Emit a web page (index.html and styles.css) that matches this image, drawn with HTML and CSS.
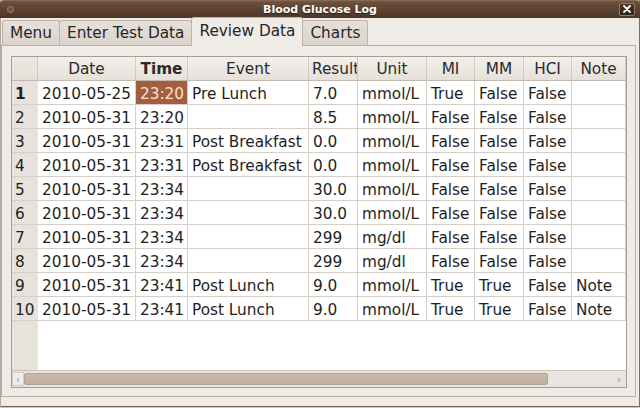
FILE: index.html
```html
<!DOCTYPE html>
<html>
<head>
<meta charset="utf-8">
<title>Blood Glucose Log</title>
<link rel="stylesheet" href="styles.css">
</head>
<body>
<div class="window">
  <div class="titlebar">
    <div class="tb-left"><span class="wm-icon"></span></div>
    <div class="title">Blood Glucose Log</div>
    <div class="tb-right">
      <span class="close"><svg width="8" height="8" viewBox="0 0 8 8"><path d="M1 1L7 7M7 1L1 7" stroke="#fff" stroke-width="1.8" stroke-linecap="round"/></svg></span>
    </div>
  </div>
  <div class="tabs">
    <div class="tab">Menu</div>
    <div class="tab">Enter Test Data</div>
    <div class="tab active">Review Data</div>
    <div class="tab">Charts</div>
  </div>
  <div class="panel">
    <div class="frame">
      <div class="view">
        <div class="grid">
          <div class="hd corner"></div>
          <div class="hd">Date</div>
          <div class="hd bold">Time</div>
          <div class="hd">Event</div>
          <div class="hd left">Result</div>
          <div class="hd">Unit</div>
          <div class="hd">MI</div>
          <div class="hd">MM</div>
          <div class="hd">HCI</div>
          <div class="hd">Note</div>

          <div class="rn bold">1</div><div class="c">2010-05-25</div><div class="c sel">23:20</div><div class="c">Pre Lunch</div><div class="c">7.0</div><div class="c">mmol/L</div><div class="c">True</div><div class="c">False</div><div class="c">False</div><div class="c"></div>
          <div class="rn">2</div><div class="c">2010-05-31</div><div class="c">23:20</div><div class="c"></div><div class="c">8.5</div><div class="c">mmol/L</div><div class="c">False</div><div class="c">False</div><div class="c">False</div><div class="c"></div>
          <div class="rn">3</div><div class="c">2010-05-31</div><div class="c">23:31</div><div class="c">Post Breakfast</div><div class="c">0.0</div><div class="c">mmol/L</div><div class="c">False</div><div class="c">False</div><div class="c">False</div><div class="c"></div>
          <div class="rn">4</div><div class="c">2010-05-31</div><div class="c">23:31</div><div class="c">Post Breakfast</div><div class="c">0.0</div><div class="c">mmol/L</div><div class="c">False</div><div class="c">False</div><div class="c">False</div><div class="c"></div>
          <div class="rn">5</div><div class="c">2010-05-31</div><div class="c">23:34</div><div class="c"></div><div class="c">30.0</div><div class="c">mmol/L</div><div class="c">False</div><div class="c">False</div><div class="c">False</div><div class="c"></div>
          <div class="rn">6</div><div class="c">2010-05-31</div><div class="c">23:34</div><div class="c"></div><div class="c">30.0</div><div class="c">mmol/L</div><div class="c">False</div><div class="c">False</div><div class="c">False</div><div class="c"></div>
          <div class="rn">7</div><div class="c">2010-05-31</div><div class="c">23:34</div><div class="c"></div><div class="c">299</div><div class="c">mg/dl</div><div class="c">False</div><div class="c">False</div><div class="c">False</div><div class="c"></div>
          <div class="rn">8</div><div class="c">2010-05-31</div><div class="c">23:34</div><div class="c"></div><div class="c">299</div><div class="c">mg/dl</div><div class="c">False</div><div class="c">False</div><div class="c">False</div><div class="c"></div>
          <div class="rn">9</div><div class="c">2010-05-31</div><div class="c">23:41</div><div class="c">Post Lunch</div><div class="c">9.0</div><div class="c">mmol/L</div><div class="c">True</div><div class="c">True</div><div class="c">False</div><div class="c">Note</div>
          <div class="rn">10</div><div class="c">2010-05-31</div><div class="c">23:41</div><div class="c">Post Lunch</div><div class="c">9.0</div><div class="c">mmol/L</div><div class="c">True</div><div class="c">True</div><div class="c">False</div><div class="c">Note</div>
        </div>
      </div>
      <div class="hscroll">
        <div class="arrow-btn">&#8249;</div>
        <div class="trough"><div class="thumb"></div></div>
        <div class="arrow-end">&#8250;</div>
      </div>
    </div>
  </div>
</div>
</body>
</html>
```

FILE: styles.css
```css
* { box-sizing: border-box; }
html, body { margin: 0; padding: 0; }
body {
  width: 640px;
  height: 408px;
  overflow: hidden;
  background: #cfc6bd;
  font-family: "DejaVu Sans", "Noto Sans", sans-serif;
  color: #222;
}
.window {
  width: 640px;
  height: 407px;
  background: #efebe7;
  display: flex;
  flex-direction: column;
  box-shadow: inset 1px 0 #b3a89e, inset -1px 0 #7d7066, inset 0 -1px #6e625a;
}
.titlebar {
  height: 18px;
  flex: none;
  display: grid;
  grid-template-columns: 1fr auto 1fr;
  align-items: center;
  background: linear-gradient(#8d6e59 0, #6d4f3c 2px, #5a4030 60%, #4d3628 100%);
  border-radius: 4px 4px 0 0;
}
.tb-left { display: flex; padding-left: 7px; }
.wm-icon {
  width: 7px; height: 7px;
  border-radius: 50%;
  border: 1px solid #9a8575;
  background: #6c5142;
}
.title {
  color: #fff;
  font-weight: bold;
  font-size: 11px;
  text-shadow: 0 1px 1px #2c1d14;
}
.tb-right { display: flex; justify-content: flex-end; padding-right: 5px; }
.close {
  width: 16px; height: 13px;
  display: flex; align-items: center; justify-content: center;
  background: linear-gradient(#4a352a, #2f2119);
  border: 1px solid #8f7b6c;
  border-radius: 2px;
}
.tabs {
  height: 27px;
  flex: none;
  display: flex;
  align-items: flex-end;
  padding-left: 2px;
}
.tab {
  height: 25px;
  padding: 0 7px;
  margin-right: -1px;
  display: flex;
  align-items: center;
  font-size: 15.3px;
  color: #262626;
  background: linear-gradient(#e6e0d9, #dbd4cc);
  border: 1px solid #bdb3a9;
  border-bottom: none;
  border-radius: 3px 3px 0 0;
}
.tab.active {
  height: 29px;
  margin-bottom: -1px;
  background: #efebe7;
  position: relative;
  z-index: 1;
  padding-bottom: 2px;
}
.panel {
  flex: none;
  margin: 0 4px 0 1px;
  height: 352px;
  border: 1px solid #b9afa5;
  padding: 10px 8px 8px 9px;
  background: #efebe7;
}
.frame {
  width: 616px;
  height: 332px;
  border: 1px solid #a89d93;
  display: flex;
  flex-direction: column;
  background: #efebe7;
}
.view {
  height: 313px;
  flex: none;
  overflow: hidden;
  background: linear-gradient(to right, #e8e2dc 0, #e8e2dc 26px, #fff 26px);
}
.grid {
  display: grid;
  grid-template-columns: 26px 98px 52px 121px 49px 69px 48px 49px 48px 1fr;
  grid-template-rows: 24px;
  grid-auto-rows: 24px;
  font-size: 15.3px;
}
.hd {
  display: flex;
  align-items: center;
  justify-content: center;
  padding-top: 1px;
  background: linear-gradient(#f3f0ec, #e6e0d9);
  border-right: 1px solid #d2cac1;
  border-bottom: 1px solid #c3b9af;
  color: #2a2a2a;
  overflow: hidden;
  white-space: nowrap;
}
.hd.left { justify-content: flex-start; padding-left: 3px; }
.hd.corner { background: linear-gradient(#ede8e3, #e4ded7); }
.bold { font-weight: bold; }
.rn {
  display: flex;
  align-items: center;
  padding: 2px 0 0 3px;
  background: #e8e2dc;
  border-bottom: 1px solid #d8d0c8;
  color: #222;
}
.c {
  display: flex;
  align-items: center;
  padding: 2px 0 0 4px;
  border-right: 1px solid #d6cfc7;
  border-bottom: 1px solid #d6cfc7;
  white-space: nowrap;
  overflow: hidden;
  color: #1e1e1e;
}
.c.sel {
  background: #a35e3e;
  color: #f7e2d5;
}
.hscroll {
  height: 17px;
  flex: none;
  border-top: 1px solid #cbc2b9;
  display: flex;
  align-items: center;
  background: #e9e4df;
}
.arrow-btn {
  width: 12px;
  height: 14px;
  border: 1px solid #d3cbc3;
  background: #f1edea;
  color: #9a9088;
  font-size: 10px;
  display: flex;
  align-items: center;
  justify-content: center;
}
.trough {
  flex: 1;
  height: 14px;
  display: flex;
  align-items: center;
}
.thumb {
  width: 524px;
  height: 12px;
  background: linear-gradient(#c9b9ab, #c0ae9f);
  border: 1px solid #b4a393;
  border-radius: 2px;
}
.arrow-end {
  width: 14px;
  color: #8a8078;
  font-size: 10px;
  text-align: center;
}
```
